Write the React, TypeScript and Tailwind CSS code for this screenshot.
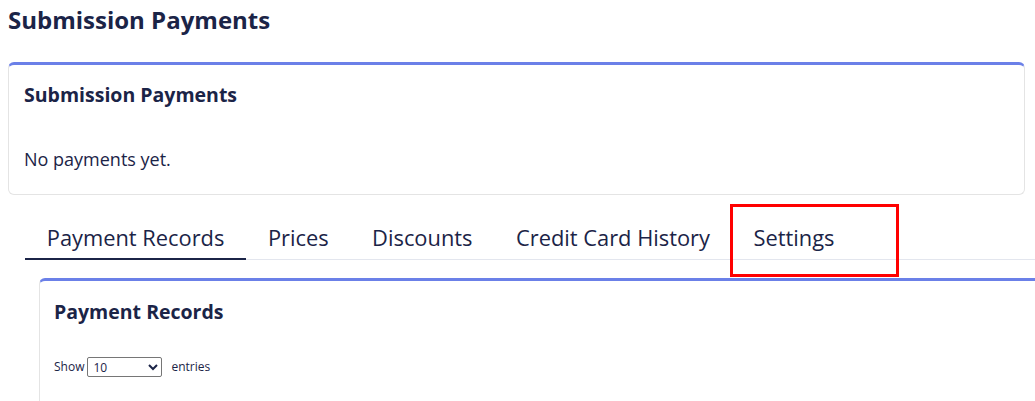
import { useState } from "react";

const tabs = ["Payment Records", "Prices", "Discounts", "Credit Card History", "Settings"];

export default function App() {
    const [active, setActive] = useState("Payment Records");

    return (
        <div className="h-[401px] w-[1035px] overflow-hidden bg-white px-2 text-[#1b2447]" style={{ fontFamily: '"Open Sans", "Noto Sans", sans-serif' }}>

            <h1 className="pt-[4px] text-[24px] font-bold leading-[32px]">Submission Payments</h1>

            <div className="mt-[26px] w-[1017px] rounded-md border border-t-[3px] border-[#e4e4e4] border-t-[#6b80e8] px-[15px]">
                <h2 className="pt-[17px] text-[19.5px] font-bold leading-[26px]">Submission Payments</h2>
                <p className="pt-[38px] pb-[22px] text-[18px] leading-[26px]">No payments yet.</p>
            </div>

            <div className="relative ml-[17px] mt-[8px] flex w-[1010px] border-b border-[#e3e6ee]">
                {tabs.map((t) => (
                    <button
                        key={t}
                        onClick={() => setActive(t)}
                        className={`relative px-[21.75px] pt-[20px] pb-[6px] text-[21.85px] leading-[30px] ${active === t ? "after:absolute after:inset-x-0 after:-bottom-px after:h-[2px] after:bg-[#1b2447]" : ""}`}
                    >
                        {t}
                        {t === "Settings" && (
                            <span className="pointer-events-none absolute top-[1px] left-[-2px] h-[73px] w-[169px] border-[3px] border-[#ff0000]" />
                        )}
                    </button>
                ))}
            </div>

            <div className="ml-[31px] mt-[18px] h-[160px] w-[1100px] rounded-t-md border border-b-0 border-t-[3px] border-[#e4e4e4] border-t-[#6b80e8] px-[14px]">
                <h3 className="pt-[18px] text-[19.5px] font-bold leading-[26px]">Payment Records</h3>
                <div className="mt-[32px] flex items-center text-[12px]">
                    <span>Show</span>
                    <select className="ml-[3px] h-[20px] w-[75px] rounded-[2px] border border-[#767676] px-[1px] text-[12px]">
                        <option>10</option>
                        <option>25</option>
                        <option>50</option>
                        <option>100</option>
                    </select>
                    <span className="ml-[9px]">entries</span>
                </div>
            </div>

        </div>
    );
}
